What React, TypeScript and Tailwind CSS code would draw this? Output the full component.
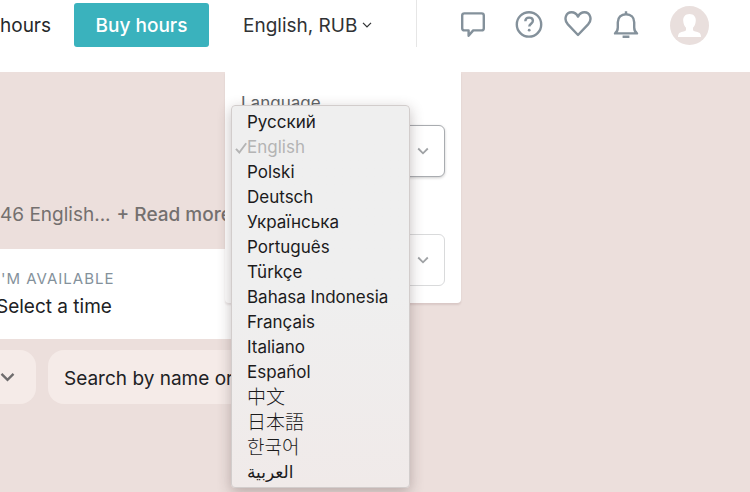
import React from "react";

type Language = { code: string; label: string; dir?: "rtl"; size?: string };

const languages: Language[] = [
  { code: "ru", label: "Русский" },
  { code: "en", label: "English" },
  { code: "pl", label: "Polski" },
  { code: "de", label: "Deutsch" },
  { code: "uk", label: "Українська" },
  { code: "pt", label: "Português" },
  { code: "tr", label: "Türkçe" },
  { code: "id", label: "Bahasa Indonesia" },
  { code: "fr", label: "Français" },
  { code: "it", label: "Italiano" },
  { code: "es", label: "Español" },
  { code: "zh", label: "中文", size: "text-[19px] font-light" },
  { code: "ja", label: "日本語", size: "text-[19px] font-light" },
  { code: "ko", label: "한국어", size: "text-[19px] font-light" },
  { code: "ar", label: "العربية", dir: "rtl" },
];

function Chevron({ className }: { className: string }) {
  return (
    <svg className={className} viewBox="0 0 12 8" fill="none" stroke="currentColor" aria-hidden="true">
      <path d="M1.2 1.5 6 6.3l4.8-4.8" />
    </svg>
  );
}

function LanguageMenu({ selected }: { selected: string }) {
  return (
    <ul
      role="listbox"
      aria-label="Language"
      className="absolute top-[33px] left-1.5 z-10 w-[179px] rounded-[4px] border border-[#d2cdcc] bg-linear-to-b from-[#efefef] from-50% to-[#f0eae9] pt-1 pb-0.5 shadow-[0_4px_14px_rgba(60,40,40,0.3)]"
    >
      {languages.map(({ code, label, dir, size }) => (
        <li
          key={code}
          role="option"
          lang={code}
          aria-selected={code === selected}
          className={`relative flex h-[25px] items-center pl-[15px] leading-[25px] whitespace-nowrap ${
            size ?? "text-[17px]"
          } ${code === selected ? "text-[#b4b4b4]" : "text-[#1c1b1c]"}`}
        >
          {code === selected && (
            <svg
              className="absolute top-[7px] left-[3px] h-3 w-3"
              viewBox="0 0 12 12"
              fill="none"
              stroke="currentColor"
              strokeWidth="1.9"
              aria-hidden="true"
            >
              <path d="M1 6.8 4.3 10.5 11.2 1.2" />
            </svg>
          )}
          <span dir={dir}>{label}</span>
        </li>
      ))}
    </ul>
  );
}

function PanelSelect({ id, label, value, active }: { id: string; label: string; value: string; active?: boolean }) {
  return (
    <div>
      <label htmlFor={id} className="block h-8 text-[17px] leading-5 text-[#606568]">
        {label}
      </label>
      <div className="relative text-[#a0a3a6]">
        <select
          id={id}
          defaultValue={value}
          className={`h-[52px] w-full appearance-none rounded-md border bg-white px-4 text-[17px] text-[#222] ${
            active ? "border-[#a9acb0] shadow-[0_1px_3px_rgba(0,0,0,0.2)]" : "border-[#d9dadb]"
          }`}
        >
          <option>{value}</option>
        </select>
        <Chevron className="pointer-events-none absolute top-[22px] right-4 h-2 w-3 stroke-[1.8]" />
      </div>
    </div>
  );
}

function LocalePanel() {
  return (
    <div className="absolute top-[72px] left-[225px] z-20 w-[236px] rounded-b bg-white px-4 pb-[17px] shadow-[0_2px_2px_rgba(80,40,40,0.12)]">
      <div className="pt-[21px]">
        <PanelSelect id="language" label="Language" value="English" active />
      </div>
      <div className="pt-[25px]">
        <PanelSelect id="currency" label="Currency" value="RUB" />
      </div>
      <LanguageMenu selected="en" />
    </div>
  );
}

function IconButton({ label, children }: { label: string; children: React.ReactNode }) {
  return (
    <button type="button" aria-label={label} className="flex h-8 w-8 items-center justify-center text-[#84919b]">
      <svg
        className="h-7 w-7"
        viewBox="0 0 28 28"
        fill="none"
        stroke="currentColor"
        strokeWidth="2.4"
        strokeLinejoin="round"
        aria-hidden="true"
      >
        {children}
      </svg>
    </button>
  );
}

function Header() {
  return (
    <header className="relative z-10 h-[72px] bg-white">
      <div className="flex h-[50px] items-center">
        <a href="#hours" className="w-[74px] pt-0.5 text-[19px] text-[#26282a]">
          hours
        </a>
        <button type="button" className="h-11 w-[135px] rounded-[3px] bg-[#3ab2bd] pt-0.5 text-[19px] font-medium text-white">
          Buy hours
        </button>
        <button
          type="button"
          aria-expanded="true"
          className="ml-[34px] flex items-center gap-[5px] pt-0.5 text-[19px] whitespace-nowrap text-[#303234]"
        >
          English, RUB
          <Chevron className="mb-0.5 h-2 w-2.5 stroke-[1.5]" />
        </button>
        <div className="ml-auto flex h-full items-center pr-[41px]">
          <div className="mr-10 h-[47px] w-px self-start bg-[#e6e6e6]" />
          <IconButton label="Messages">
            <path d="M5.4 2.4h17.2q2.2 0 2.2 2.2v12.6q0 2.2-2.2 2.2h-8.4l-4.6 5.4v-5.4H5.4q-2.2 0-2.2-2.2V4.6q0-2.2 2.2-2.2Z" />
          </IconButton>
          <div className="w-6" />
          <IconButton label="Help">
            <circle cx="14" cy="13.4" r="12.2" />
            <path d="M10.3 10.2c.1-2.3 1.6-3.6 3.8-3.6s3.8 1.3 3.8 3.2c0 2.9-3.6 2.9-3.6 5.7" />
            <circle cx="14.2" cy="19.2" r="1.4" fill="currentColor" stroke="none" />
          </IconButton>
          <div className="w-[17px]" />
          <IconButton label="Favourites">
            <path d="M14 24 3.9 13.4C-.8 8.2 2.1 1.3 7.5 1.3c3 0 5.2 1.7 6.5 4.3 1.3-2.6 3.5-4.3 6.5-4.3 5.4 0 8.3 6.9 3.6 12.1Z" />
          </IconButton>
          <div className="w-4" />
          <IconButton label="Notifications">
            <path d="M3 22.4c2-1.6 2.8-3.5 2.8-6v-5.2c0-4.8 3.4-8 8.2-8s8.2 3.2 8.2 8v5.2c0 2.5.8 4.4 2.8 6Z" />
            <path d="M14 .2v3M10.6 25.8h6.8" />
          </IconButton>
          <button type="button" aria-label="Account" className="ml-7 h-[39px] w-[39px] overflow-hidden rounded-full">
            <svg viewBox="0 0 39 39" aria-hidden="true">
              <rect width="39" height="39" fill="#e9dfdd" />
              <path
                fill="white"
                d="M19.5 8c4.3 0 6.5 2.8 6.3 6.8-.2 3.4-1.4 5.5-2.8 7v2.4c0 .8 4.4 1.5 6.3 2.5 1.2.8 1.6 2.2 1.7 4.3H8c.1-2.1.5-3.5 1.7-4.3 1.9-1 6.3-1.7 6.3-2.5v-2.4c-1.4-1.5-2.6-3.6-2.8-7C13 10.8 15.2 8 19.5 8Z"
              />
            </svg>
          </button>
        </div>
      </div>
      <LocalePanel />
    </header>
  );
}

export default function App() {
  return (
    <div className="min-h-screen overflow-hidden bg-[#ecdfdc] font-['Inter','Noto_Sans_CJK_SC','Noto_Sans_CJK_KR','DejaVu_Sans',sans-serif] text-[#202124]">
      <Header />
      <main className="pt-[131px]">
        <p className="flex h-[46px] gap-1.5 text-[19px] leading-6 whitespace-nowrap text-[#74706f]">
          <span>46 English...</span>
          <a href="#more" className="font-medium">
            + Read more
          </a>
        </p>
        <button type="button" className="flex h-[90px] w-[300px] flex-col bg-white pt-5 text-left whitespace-nowrap">
          <span className="-ml-1 text-[15px] leading-5 tracking-[1px] text-[#84919b]">I'M AVAILABLE</span>
          <span className="-ml-1 pt-1 text-[19px] leading-7">Select a time</span>
        </button>
        <div className="flex gap-3 pt-[11px]">
          <button type="button" aria-label="More filters" className="h-[54px] w-9 rounded-r-2xl bg-[#f5ebe8] text-[#6e6c6d]">
            <Chevron className="h-2.5 w-[15px] stroke-[1.9]" />
          </button>
          <input
            type="search"
            aria-label="Search by name or keyword"
            placeholder="Search by name or keyword"
            className="h-[54px] w-[340px] rounded-2xl bg-[#f5ebe8] px-4 pt-0.5 text-[19px] outline-none placeholder:text-[#202124]"
          />
        </div>
      </main>
    </div>
  );
}
